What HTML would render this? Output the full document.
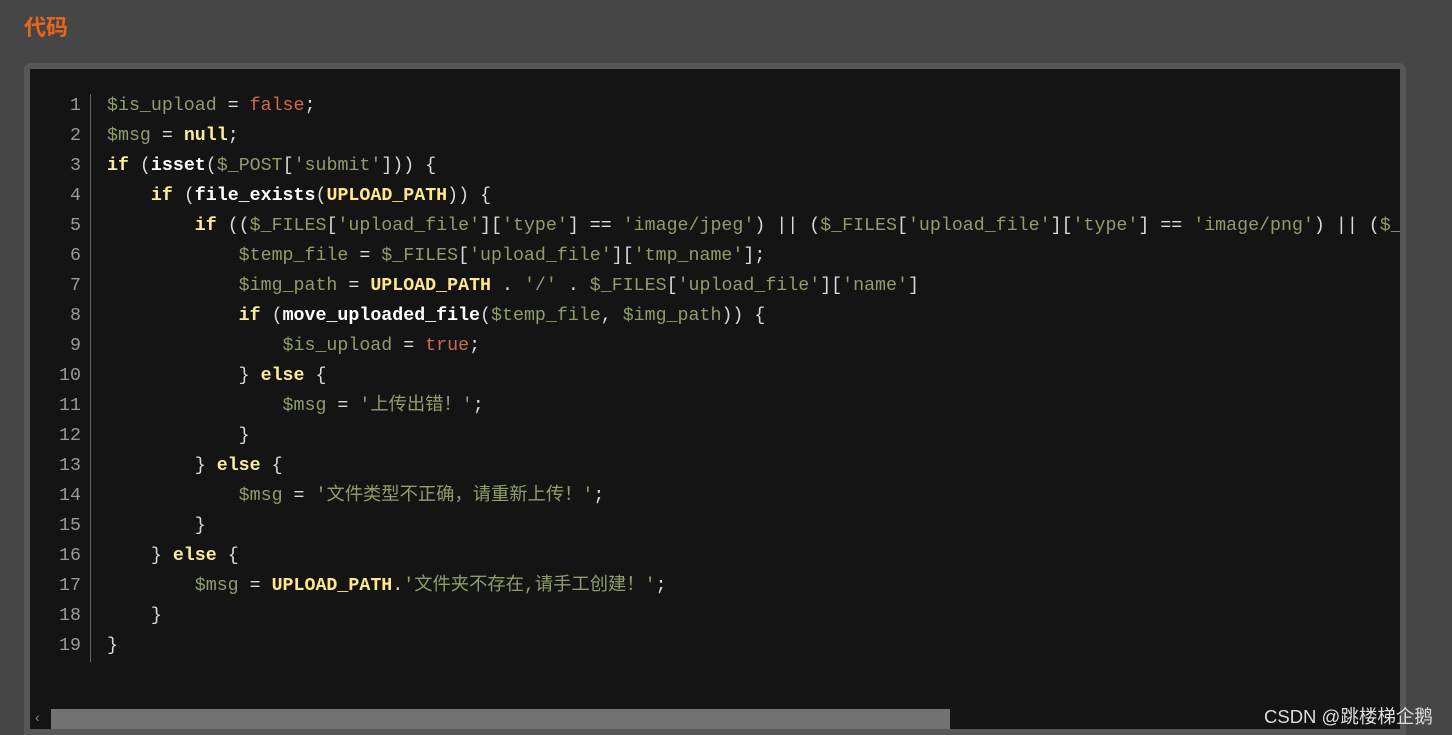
<!DOCTYPE html>
<html><head><meta charset="utf-8"><style>
html,body{margin:0;padding:0;background:#464646;width:1452px;height:735px;overflow:hidden;font-family:"Liberation Sans","Noto Sans CJK SC",sans-serif}
.t{position:absolute;left:24px;top:10px;color:#e8661a;font-size:22px;font-weight:bold;font-family:"Noto Sans CJK SC",sans-serif}
.box{position:absolute;left:24px;top:63px;width:1370px;height:666px;border:6px solid #575757;border-bottom:0;border-radius:7px 7px 0 0;background:#141414;overflow:hidden}
.ln{position:absolute;left:0;top:22px;width:51px;text-align:right;color:#9a9a9a;font:18.3px/30px "Liberation Mono",monospace}
.bar{position:absolute;left:60px;top:25px;width:1px;height:568px;background:#666}
pre{position:absolute;left:77px;top:22px;margin:0;color:#dadada;font:18.3px/30px "Liberation Mono","Noto Sans CJK SC",monospace;white-space:pre}
.v{color:#8f9d6a}.s{color:#8f9d6a}.k{color:#f9ee98;font-weight:bold}.r{color:#cf6a4c}.f{color:#fff;font-weight:bold}.c{color:#ffe88a;font-weight:bold}
.th{position:absolute;left:21px;top:640px;width:899px;height:20px;background:#727272}
.ar{position:absolute;left:5px;top:640px;color:#888;font-size:14px}
.bot{position:absolute;left:0;top:660px;width:1370px;height:6px;background:#575757}
.w{position:absolute;left:1264px;top:703px;color:#ddd;font-size:18.5px;font-family:"Liberation Sans","Noto Sans CJK SC",sans-serif}
</style></head><body>
<div class="t">代码</div>
<div class="box">
<div class="ln">1<br>2<br>3<br>4<br>5<br>6<br>7<br>8<br>9<br>10<br>11<br>12<br>13<br>14<br>15<br>16<br>17<br>18<br>19</div>
<div class="bar"></div>
<pre><span class="v">$is_upload</span> = <span class="r">false</span>;
<span class="v">$msg</span> = <span class="k">null</span>;
<span class="k">if</span> (<span class="f">isset</span>(<span class="v">$_POST</span>[<span class="s">'submit'</span>])) {
    <span class="k">if</span> (<span class="f">file_exists</span>(<span class="c">UPLOAD_PATH</span>)) {
        <span class="k">if</span> ((<span class="v">$_FILES</span>[<span class="s">'upload_file'</span>][<span class="s">'type'</span>] == <span class="s">'image/jpeg'</span>) || (<span class="v">$_FILES</span>[<span class="s">'upload_file'</span>][<span class="s">'type'</span>] == <span class="s">'image/png'</span>) || (<span class="v">$_FILES</span>
            <span class="v">$temp_file</span> = <span class="v">$_FILES</span>[<span class="s">'upload_file'</span>][<span class="s">'tmp_name'</span>];
            <span class="v">$img_path</span> = <span class="c">UPLOAD_PATH</span> . <span class="s">'/'</span> . <span class="v">$_FILES</span>[<span class="s">'upload_file'</span>][<span class="s">'name'</span>]
            <span class="k">if</span> (<span class="f">move_uploaded_file</span>(<span class="v">$temp_file</span>, <span class="v">$img_path</span>)) {
                <span class="v">$is_upload</span> = <span class="r">true</span>;
            } <span class="k">else</span> {
                <span class="v">$msg</span> = <span class="s">'上传出错！'</span>;
            }
        } <span class="k">else</span> {
            <span class="v">$msg</span> = <span class="s">'文件类型不正确，请重新上传！'</span>;
        }
    } <span class="k">else</span> {
        <span class="v">$msg</span> = <span class="c">UPLOAD_PATH</span>.<span class="s">'文件夹不存在,请手工创建！'</span>;
    }
}</pre>
<div class="th"></div><div class="ar">‹</div><div class="bot"></div>
</div>
<div class="w">CSDN @跳楼梯企鹅</div>
</body></html>
